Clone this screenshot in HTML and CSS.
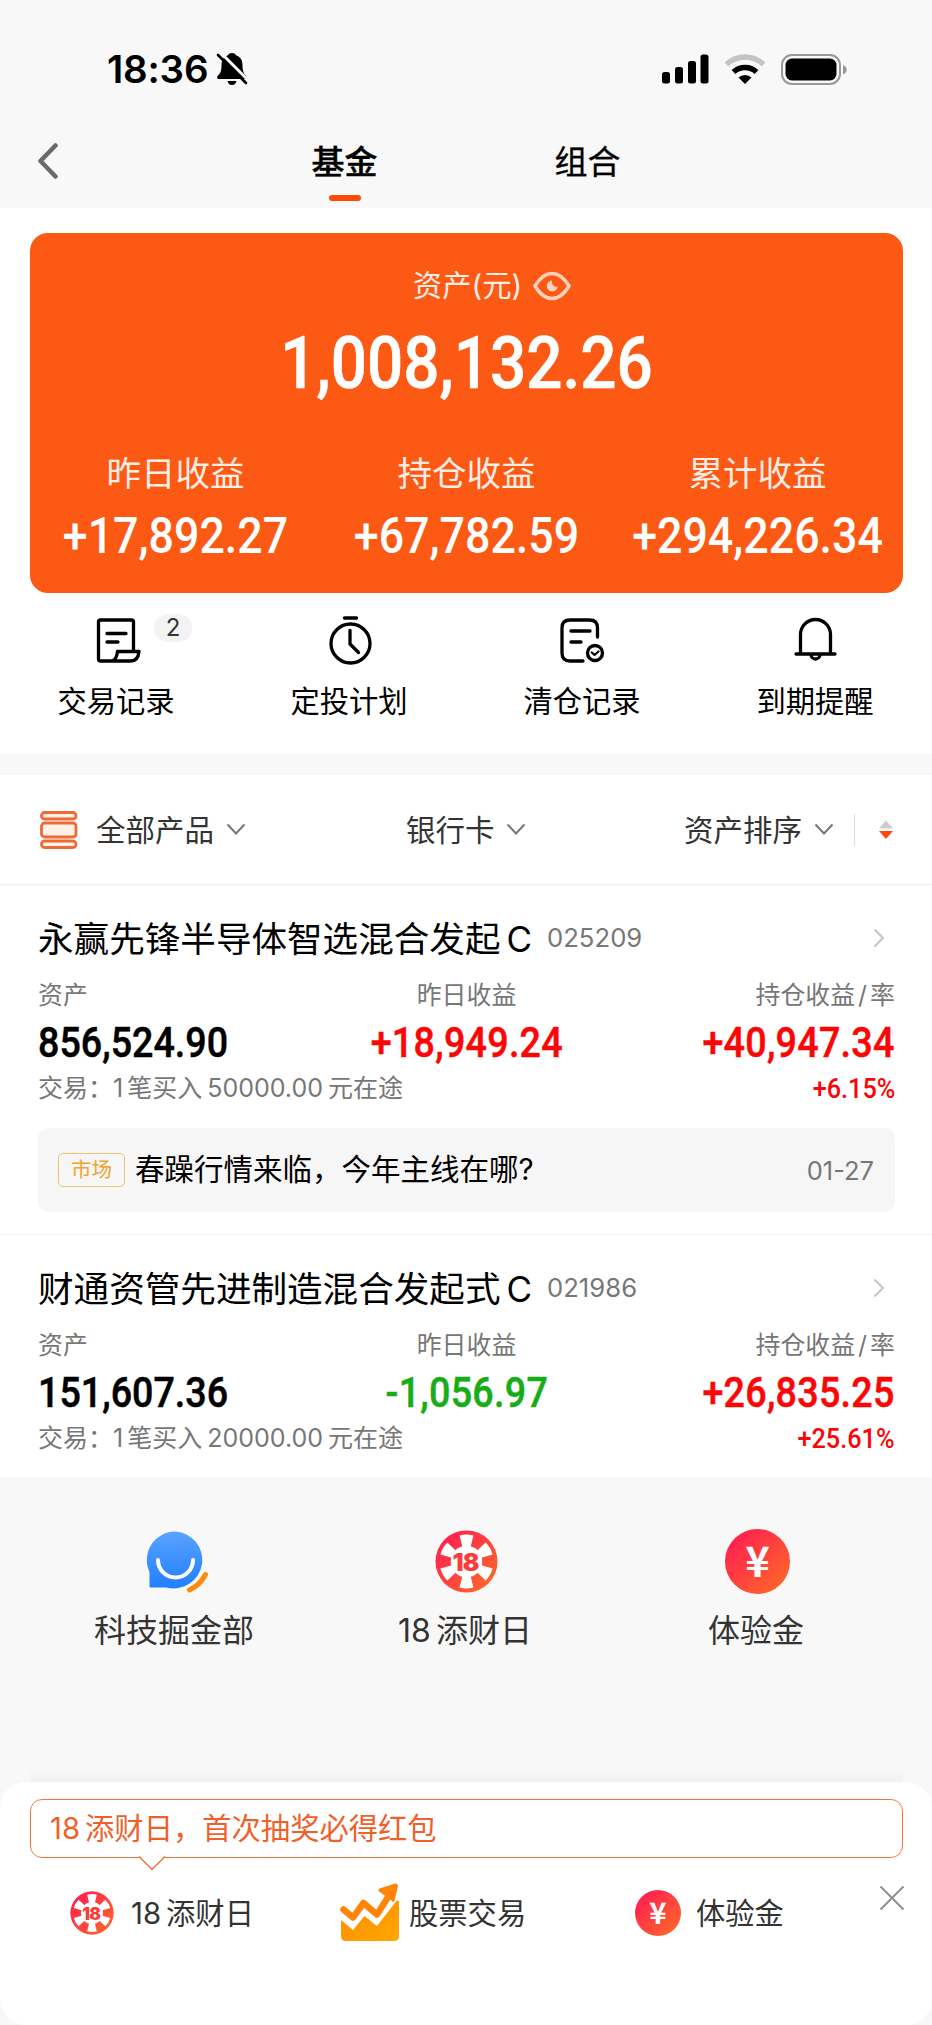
FILE: index.html
```html
<!DOCTYPE html>
<html lang="zh-CN">

<head>
    <meta charset="UTF-8">
    <title>基金</title>
    <link rel="stylesheet" href="styles.css">
</head>

<body>
    <svg class="defs" width="0" height="0">
        <defs>
            <linearGradient id="red" x1="0" y1="0" x2="1" y2="1">
                <stop offset="0.1" stop-color="#ff1f50" />
                <stop offset="0.95" stop-color="#ff6a28" />
            </linearGradient>
            <linearGradient id="blue" x1="0" y1="0" x2="0" y2="1">
                <stop offset="0" stop-color="#5aa2ff" />
                <stop offset="1" stop-color="#2080ff" />
            </linearGradient>
            <linearGradient id="amber" x1="0" y1="0" x2="1" y2="1">
                <stop offset="0" stop-color="#ff8a00" />
                <stop offset="1" stop-color="#ffa800" />
            </linearGradient>
            <symbol id="chip" viewBox="0 0 64 64">
                <circle cx="32" cy="32" r="31.5" fill="url(#red)" />
                <g fill="#fff">
                    <circle cx="32" cy="32" r="16" />
                    <path id="wedge" d="M25 5.500Q32 3.500 39 5.500L36 18V24H28V18Z" />
                    <use href="#wedge" transform="rotate(60 32 32)" />
                    <use href="#wedge" transform="rotate(120 32 32)" />
                    <use href="#wedge" transform="rotate(180 32 32)" />
                    <use href="#wedge" transform="rotate(240 32 32)" />
                    <use href="#wedge" transform="rotate(300 32 32)" />
                </g>
                <text class="chip-text" x="31" y="41.5">18</text>
            </symbol>
            <symbol id="yuan" viewBox="0 0 64 64">
                <circle cx="32" cy="32" r="32" fill="url(#red)" />
                <text class="yuan-text" x="32" y="47">¥</text>
            </symbol>
        </defs>
    </svg>

    <header class="header">
        <div class="status">
            <span class="time">18:36</span>
            <svg class="mute" width="32" height="34" viewBox="0 0 32 34">
                <path d="M16 1c2.600 0 3.700 1.500 4 2.300 4.500 1.500 6.500 5 6.500 10.200 0 6 1.500 8 3.500 10.500 1 1.500.5 3-1 3H3c-2 0-2.500-2-1-3.500 2.500-2.500 3.500-4.500 3.500-10C5.500 8 7.500 4.800 12 3.300 12.300 2.500 13.400 1 16 1zM11.500 29h9c-.5 2.500-2.200 4-4.500 4s-4-1.500-4.500-4z" />
                <path d="M5 1L32 28" stroke="#f8f8f8" stroke-width="3" />
                <path d="M2 3L30 31" stroke="#000" stroke-width="2.600" stroke-linecap="round" />
            </svg>
            <svg class="signal" width="47" height="30" viewBox="0 0 47 30">
                <rect x="0" y="18" width="8" height="11.500" rx="2.500" />
                <rect x="13" y="13" width="8" height="16.500" rx="2.500" />
                <rect x="26" y="7" width="8" height="22.500" rx="2.500" />
                <rect x="38.500" y="0.500" width="8" height="29" rx="2.500" />
            </svg>
            <svg class="wifi" width="42" height="30" viewBox="0 0 42 30">
                <path d="M2.500 10.500A26.500 26.500 0 0 1 39.500 10.500" fill="none" stroke="#c4c4c4" stroke-width="5.500" />
                <path d="M9.500 18A17 17 0 0 1 32.500 18" fill="none" stroke="#000" stroke-width="5.500" />
                <path d="M14.500 23.500A9.500 9.500 0 0 1 27.500 23.500L21 30Z" />
            </svg>
            <svg class="battery" width="66" height="31" viewBox="0 0 66 31">
                <rect x="1" y="1" width="58" height="29" rx="10" fill="none" stroke="#999" stroke-width="2" />
                <rect x="4.500" y="4.500" width="51" height="22" rx="6.500" />
                <path d="M62 11c5 2 5 7.500 0 9.500z" fill="#999" />
            </svg>
        </div>
        <nav class="nav">
            <div class="back">
                <svg width="20" height="36" viewBox="0 0 20 36">
                    <path d="M17.500 2.500L2.500 18L17.500 33.500" fill="none" stroke="#6a6a6a" stroke-width="4.500" stroke-linecap="round" stroke-linejoin="round" />
                </svg>
            </div>
            <div class="tab active">基金</div>
            <div class="tab">组合</div>
        </nav>
    </header>

    <section class="overview">
        <div class="card">
            <div class="card-title">
                <span>资产(元)</span>
                <svg width="38" height="30" viewBox="0 0 38 30">
                    <path d="M2 15C7 6.500 12.500 2.500 19 2.500S31 6.500 36 15C31 23.500 25.500 27.500 19 27.500S7 23.500 2 15Z" fill="none" stroke="#ffd0bd" stroke-width="3.500" />
                    <path d="M19 9.500a5.500 5.500 0 1 0 5.700 6.200c-3.500.5-6.200-2-5.700-6.200z" fill="#ffd0bd" />
                </svg>
            </div>
            <div class="total num">1,008,132.26</div>
            <div class="profits">
                <div>
                    <p class="profit-label">昨日收益</p>
                    <p class="profit num">+17,892.27</p>
                </div>
                <div>
                    <p class="profit-label">持仓收益</p>
                    <p class="profit num">+67,782.59</p>
                </div>
                <div>
                    <p class="profit-label">累计收益</p>
                    <p class="profit num">+294,226.34</p>
                </div>
            </div>
        </div>

        <div class="shortcuts">
            <div class="shortcut">
                <svg class="line-icon" width="48" height="50" viewBox="0 0 48 50">
                    <path d="M40.500 35V6q0-2-2-2H7.500q-2 0-2 2V43q0 2 2 2H38q7 0 8-9.500H24.500q-1 9-6 9.500" />
                    <path d="M14 17.500H33M14 26H25" />
                </svg>
                <span class="badge">2</span>
                <p>交易记录</p>
            </div>
            <div class="shortcut">
                <svg class="line-icon" width="48" height="50" viewBox="0 0 48 50">
                    <circle cx="24.500" cy="27.500" r="19.500" />
                    <path d="M18.500 2H30.500M24 14.500V28L32.500 36.500" />
                </svg>
                <p>定投计划</p>
            </div>
            <div class="shortcut">
                <svg class="line-icon" width="48" height="50" viewBox="0 0 48 50">
                    <path d="M38.500 21V12q0-8-8-8H11q-8 0-8 8V37q0 8 8 8H24M12 15H31M12 26H22" />
                    <circle cx="36" cy="37" r="7.500" />
                    <path class="check" d="M32.800 36.500L35.500 39L39.500 35.500" />
                </svg>
                <p>清仓记录</p>
            </div>
            <div class="shortcut">
                <svg class="line-icon" width="48" height="50" viewBox="0 0 48 50">
                    <path d="M8.500 37V18.500a15 15 0 0 1 30 0V37M4 38H43M19 38.500a4.500 4.500 0 0 0 9 0" />
                </svg>
                <p>到期提醒</p>
            </div>
        </div>
    </section>

    <section class="filters">
        <svg class="product-icon" width="38" height="38" viewBox="0 0 38 38">
            <rect x="1.500" y="1.500" width="34.500" height="6.500" rx="3" />
            <rect x="1.500" y="12" width="34.500" height="14" rx="3" />
            <rect x="1.500" y="30" width="34.500" height="6.500" rx="3" />
        </svg>
        <span class="filter-all">全部产品</span>
        <svg class="down" width="20" height="13" viewBox="0 0 20 13"><path d="M1.500 1.500L10 10.500L18.500 1.500" /></svg>
        <span class="filter-card">银行卡</span>
        <svg class="down" width="20" height="13" viewBox="0 0 20 13"><path d="M1.500 1.500L10 10.500L18.500 1.500" /></svg>
        <span class="filter-sort">资产排序</span>
        <svg class="down" width="20" height="13" viewBox="0 0 20 13"><path d="M1.500 1.500L10 10.500L18.500 1.500" /></svg>
        <svg class="sort" width="14" height="20" viewBox="0 0 14 20">
            <path d="M7 0.500L14 8.500H0Z" fill="#ccc" />
            <path d="M0 11H14L7 19Z" fill="#ff4a0a" />
        </svg>
    </section>

    <section class="fund">
        <div class="fund-head">
            <h2>永赢先锋半导体智选混合发起<span class="share">C</span></h2>
            <span class="code">025209</span>
            <svg class="next" width="12" height="20" viewBox="0 0 12 20"><path d="M1.500 1.500L10 10L1.500 18.500" /></svg>
        </div>
        <div class="fund-grid">
            <p class="label">资产</p>
            <p class="label">昨日收益</p>
            <p class="label">持仓收益<span class="slash">/</span>率</p>
            <p class="value num">856,524.90</p>
            <p class="value num up">+18,949.24</p>
            <p class="value num up">+40,947.34</p>
        </div>
        <div class="fund-foot">
            <p class="trade">交易：<span class="count">1</span>笔买入<span class="amount">50000.00</span>元在途</p>
            <p class="rate num up">+6.15%</p>
        </div>
        <div class="news">
            <span class="tag">市场</span>
            <span class="news-title">春躁行情来临，今年主线在哪?</span>
            <span class="date">01-27</span>
        </div>
    </section>

    <section class="fund last">
        <div class="fund-head">
            <h2>财通资管先进制造混合发起式<span class="share">C</span></h2>
            <span class="code">021986</span>
            <svg class="next" width="12" height="20" viewBox="0 0 12 20"><path d="M1.500 1.500L10 10L1.500 18.500" /></svg>
        </div>
        <div class="fund-grid">
            <p class="label">资产</p>
            <p class="label">昨日收益</p>
            <p class="label">持仓收益<span class="slash">/</span>率</p>
            <p class="value num">151,607.36</p>
            <p class="value num down-value">-1,056.97</p>
            <p class="value num up">+26,835.25</p>
        </div>
        <div class="fund-foot">
            <p class="trade">交易：<span class="count">1</span>笔买入<span class="amount">20000.00</span>元在途</p>
            <p class="rate num up">+25.61%</p>
        </div>
    </section>

    <section class="links">
        <div class="link">
            <svg width="66" height="66" viewBox="-3 -1 66 66">
                <path d="M29.500 1.500a28.500 28.500 0 1 1-9 56H4.500Q3.500 57.500 3.500 56V42A28.500 28.500 0 0 1 29.500 1.500z" fill="url(#blue)" />
                <path d="M12 30a17.500 17.500 0 0 0 35 0" fill="none" stroke="#fff" stroke-width="4" stroke-linecap="round" />
                <path d="M59.500 44.500Q54 55 43.500 60" fill="none" stroke="#ff8a0a" stroke-width="5" stroke-linecap="round" />
            </svg>
            <p>科技掘金部</p>
        </div>
        <div class="link">
            <svg width="66" height="66"><use href="#chip" x="1" y="1" width="63" height="63" /></svg>
            <p><span class="eighteen">18</span>添财日</p>
        </div>
        <div class="link">
            <svg width="66" height="66"><use href="#yuan" width="65" height="65" /></svg>
            <p>体验金</p>
        </div>
    </section>

    <footer class="dock">
        <div class="sheet">
            <div class="bubble">
                <span class="eighteen">18</span>添财日，首次抽奖必得红包
                <svg class="pointer" width="28" height="15" viewBox="0 0 28 15">
                    <path d="M1 0H27L14 13.500Z" fill="#fff" />
                    <path d="M1 0.500L14 13.500L27 0.500" fill="none" stroke="#f0783f" stroke-width="1.500" />
                </svg>
            </div>
            <div class="dock-row">
                <svg class="dock-chip" width="44" height="44"><use href="#chip" width="44" height="44" /></svg>
                <span class="dock-day"><span class="eighteen">18</span>添财日</span>
                <svg class="dock-stock" width="60" height="60" viewBox="0 0 60 60">
                    <path d="M1 37L13 47L24.500 33L37 43L56 18.500Q59 16 59 20V53q0 5-5 5H6q-5 0-5-5Z" fill="url(#amber)" />
                    <path d="M3.500 26.500L13 34.500L23.500 20L37 31.500L50 11" fill="none" stroke="#ff8408" stroke-width="6.500" stroke-linejoin="round" stroke-linecap="round" />
                    <path d="M39.500 5.500L55 .5Q58 0 58 3L54.500 18Q53.500 20 52 18L38.500 8Q38 6.500 39.500 5.500Z" fill="#ff8408" />
                </svg>
                <span class="dock-trade">股票交易</span>
                <svg class="dock-yuan" width="46" height="46"><use href="#yuan" width="46" height="46" /></svg>
                <span class="dock-gold">体验金</span>
                <svg class="close" width="26" height="26" viewBox="0 0 26 26">
                    <path d="M1.500 1.500L24.500 24.500M24.500 1.500L1.500 24.500" stroke="#8e8e8e" stroke-width="2" />
                </svg>
            </div>
        </div>
    </footer>
</body>

</html>
```
FILE: styles.css
```css
* {
    box-sizing: border-box;
}

body {
    margin: 0;
    width: 932px;
    height: 2025px;
    overflow: hidden;
    background: #f8f8f8;
    color: #000;
    font-family: Inter, "Noto Sans CJK SC", sans-serif;
    display: flex;
    flex-direction: column;
}

p,
h2 {
    margin: 0;
    font-weight: 400;
}

svg {
    display: block;
    flex: none;
}

.defs {
    position: absolute;
}

/* narrow figures for amounts */
.num {
    font-family: Roboto, sans-serif;
    font-weight: 500;
    transform: scaleX(0.886);
    white-space: nowrap;
}

/* header */
.header {
    height: 208px;
}

.status {
    height: 138px;
    display: flex;
    align-items: center;
    padding: 0 85px 0 107px;
}

.time {
    width: 109px;
    font-size: 38.500px;
    font-weight: 600;
    letter-spacing: -0.200px;
}

.signal {
    margin-left: auto;
    margin-right: 15px;
}

.wifi {
    margin-right: 15px;
}

.nav {
    height: 70px;
    display: flex;
}

.back {
    width: 223px;
    padding: 5px 0 0 38px;
}

.tab {
    width: 243px;
    height: 64px;
    font-size: 33px;
    line-height: 48px;
    text-align: center;
    -webkit-text-stroke: 0.300px #000;
}

.tab.active {
    font-weight: 500;
    -webkit-text-stroke: 0.400px #000;
}

.tab.active::after {
    content: "";
    display: block;
    width: 32px;
    height: 6px;
    margin: 9px auto 0;
    border-radius: 3px;
    background: #ff4a0a;
}

/* assets */
.overview {
    height: 546px;
    padding-top: 25px;
    background: #fff;
}

.card {
    height: 360px;
    margin: 0 29px 0 30px;
    padding-top: 33px;
    border-radius: 18px;
    background: #fc5a14;
    color: #fff;
    text-align: center;
}

.card-title {
    display: flex;
    justify-content: center;
    align-items: center;
    gap: 11px;
    padding-left: 51px;
    height: 40px;
    font-size: 29.300px;
    line-height: 40px;
    color: #ffeee6;
}

.total {
    margin-top: 18px;
    font-size: 72px;
    line-height: 80px;
    -webkit-text-stroke: 0.600px #fff;
}

.profits {
    display: grid;
    grid-template-columns: repeat(3, 1fr);
    margin-top: 48px;
}

.profit-label {
    font-size: 34.500px;
    line-height: 44px;
    color: #ffeee6;
}

.profit {
    margin-top: 15px;
    font-size: 50.500px;
    line-height: 50px;
}

.shortcuts {
    display: grid;
    grid-template-columns: repeat(4, 1fr);
    padding-top: 23px;
}

.shortcut {
    position: relative;
    display: flex;
    flex-direction: column;
    align-items: center;
    font-size: 29.300px;
    line-height: 36px;
}

.shortcut p {
    margin: 18px 1px 0 0;
}

.line-icon {
    fill: none;
    stroke: #000;
    stroke-width: 3.300;
    stroke-linecap: round;
    stroke-linejoin: round;
}

.check {
    stroke-width: 2.200;
}

.badge {
    position: absolute;
    left: 154px;
    top: -2px;
    width: 38px;
    height: 28px;
    border-radius: 14px;
    background: #f3f3f3;
    color: #333;
    font-size: 24px;
    line-height: 28px;
    text-align: center;
}

/* filters */
.filters {
    height: 110px;
    margin-top: 21px;
    display: flex;
    align-items: center;
    padding-left: 40px;
    background: #fff;
    border-bottom: 1px solid #eee;
    font-size: 29.500px;
    color: #333;
}

.filters span {
    padding-bottom: 3px;
}

.product-icon {
    fill: #fff0e8;
    stroke: #ee6a35;
    stroke-width: 2.800;
}

.filter-all {
    width: 130px;
    margin-left: 18px;
}

.filter-card {
    width: 100px;
    margin-left: 160px;
}

.filter-sort {
    width: 130px;
    margin-left: 158px;
}

.down {
    fill: none;
    stroke: #777;
    stroke-width: 2;
}

.sort {
    box-sizing: content-box;
    margin-left: 20px;
    padding: 6px 0 6px 24px;
    border-left: 1px solid #ddd;
}

/* fund list */
.fund {
    height: 350px;
    padding: 30px 37px 0 38px;
    background: #fff;
    border-bottom: 1px solid #f3f3f3;
}

.fund.last {
    height: 242px;
    border: 0;
}

.fund-head {
    display: flex;
    align-items: center;
    height: 46px;
}

.fund-head h2 {
    width: 509px;
    height: 46px;
    font-size: 35.600px;
    line-height: 48px;
    white-space: nowrap;
}

.share {
    margin-left: 6px;
    font-size: 35px;
}

.code {
    padding-bottom: 2px;
    font-size: 25.700px;
    color: #777;
}

.next {
    margin: 0 10px 1px auto;
    fill: none;
    stroke: #c4c4c4;
    stroke-width: 2;
}

.fund-grid {
    display: grid;
    grid-template-columns: repeat(3, 1fr);
    padding-top: 16px;
    text-align: center;
}

.fund-grid p:nth-child(3n+1) {
    text-align: left;
    transform-origin: left;
}

.fund-grid p:nth-child(3n) {
    text-align: right;
    transform-origin: right;
}

.label {
    font-size: 24.900px;
    line-height: 37px;
    color: #777;
}

.slash {
    margin: 0 3px;
}

.value {
    margin-top: 3px;
    font-size: 42.500px;
    line-height: 52px;
    -webkit-text-stroke: 0.500px currentColor;
}

.value.up,
.value.down-value {
    letter-spacing: 0.300px;
}

.up {
    color: #fb0606;
}

.down-value {
    color: #18ad18;
}

.fund-foot {
    display: flex;
    justify-content: space-between;
    height: 35px;
    font-size: 25px;
    line-height: 38px;
    color: #777;
}

.count {
    margin-right: 4px;
}

.amount {
    margin: 0 5px;
}

.rate {
    font-size: 28.500px;
    line-height: 39px;
    color: #fb0606;
    transform-origin: right;
}

.news {
    display: flex;
    align-items: center;
    height: 84px;
    margin-top: 24px;
    padding: 0 21px 0 20px;
    border-radius: 10px;
    background: #f6f6f6;
}

.tag {
    width: 67px;
    height: 34px;
    border: 1.500px solid #f5c06a;
    border-radius: 5px;
    color: #f0a42c;
    font-size: 20.500px;
    line-height: 32px;
    text-align: center;
}

.news-title {
    margin-left: 10px;
    padding-bottom: 6px;
    font-size: 29.500px;
}

.date {
    margin-left: auto;
    font-size: 25.500px;
    color: #777;
}

/* links */
.links {
    display: grid;
    grid-template-columns: repeat(3, 1fr);
    padding: 52px 29px 0 30px;
}

.link {
    display: flex;
    flex-direction: column;
    align-items: center;
    font-size: 32px;
    line-height: 40px;
    color: #333;
}

.link p {
    margin: 16px 3px 0 0;
}

.eighteen {
    margin-right: 5px;
}

.chip-text {
    font: 900 25px Inter, sans-serif;
    letter-spacing: -1px;
    text-anchor: middle;
    fill: #f93c3c;
}

.yuan-text {
    font: 700 41px "Noto Sans CJK SC", sans-serif;
    text-anchor: middle;
    fill: #fff;
}

/* bottom sheet */
.dock {
    height: 253px;
    margin-top: auto;
    background: linear-gradient(#f6f6f6, #f1f1f1) 30px 0 / 873px 10px no-repeat;
}

.sheet {
    height: 243px;
    margin-top: 10px;
    padding: 17px 29px 0 30px;
    border-radius: 26px;
    background: #fff;
}

.bubble {
    position: relative;
    height: 59px;
    padding-left: 19px;
    border: 1.500px solid #f0783f;
    border-radius: 12px;
    font-size: 29.300px;
    line-height: 57px;
    color: #f0602a;
}

.pointer {
    position: absolute;
    left: 107px;
    top: 56px;
}

.dock-row {
    display: flex;
    align-items: center;
    height: 60px;
    margin-top: 25px;
    padding-left: 40px;
    font-size: 29.300px;
    color: #333;
}

.dock-row > span {
    padding-bottom: 4px;
}

.dock-day {
    width: 209px;
    margin-left: 17px;
}

.dock-trade {
    width: 226px;
    margin-left: 9px;
}

.dock-gold {
    margin-left: 15px;
}

.close {
    margin: 0 -2px 30px auto;
}
```
